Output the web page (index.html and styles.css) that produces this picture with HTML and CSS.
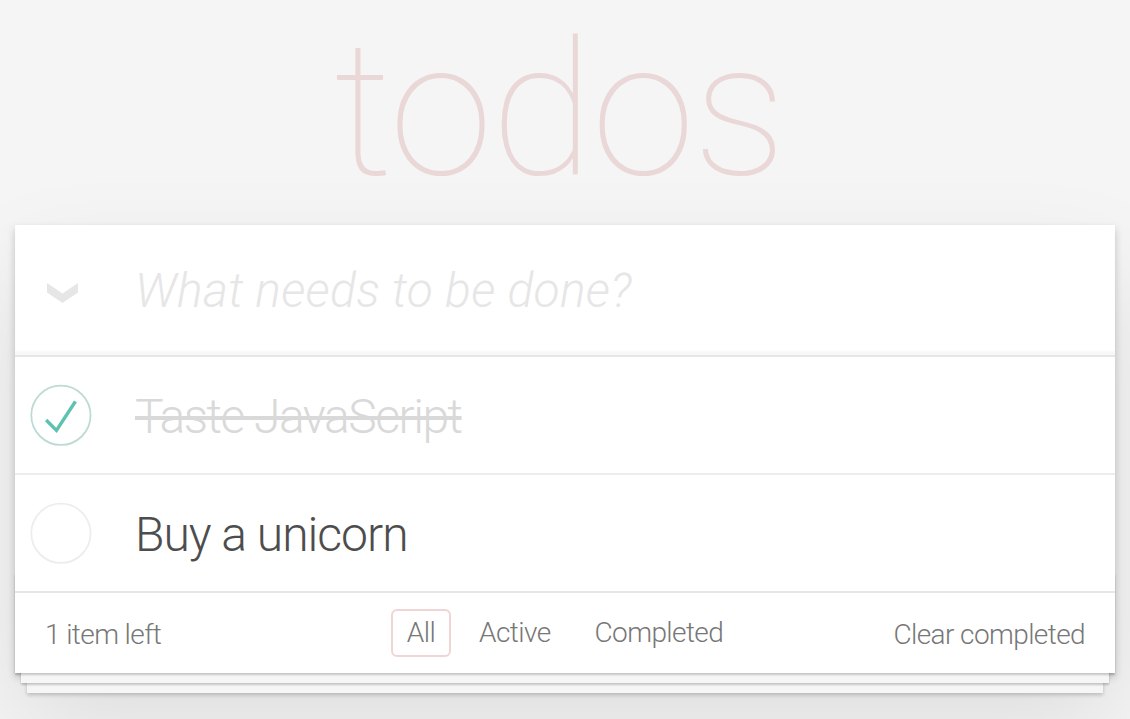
FILE: index.html
```html
<!DOCTYPE html>
<html lang="en">
<head>
<meta charset="utf-8">
<title>Todos</title>
<link rel="stylesheet" href="styles.css">
</head>
<body>
<div class="page">
  <h1 class="title">todos</h1>
  <section class="todoapp">
    <header class="new-row">
      <span class="toggle-all">
        <svg width="31" height="20" viewBox="0 0 31 20"><polygon points="0,0 15.5,10.5 31,0 31,9.5 15.5,20 0,9.5" fill="#e6e6e6"/></svg>
      </span>
      <input class="new-todo" type="text" placeholder="What needs to be done?">
    </header>
    <ul class="todo-list">
      <li class="todo completed">
        <svg class="toggle" width="80" height="80" viewBox="-10 -18 100 135"><circle cx="50" cy="50" r="50" fill="none" stroke="#bddad5" stroke-width="3"/><path fill="#5dc2af" d="M72 25L42 71 27 56l-4 4 20 20 34-52z"/></svg>
        <span class="label">Taste JavaScript</span>
      </li>
      <li class="todo">
        <svg class="toggle" width="80" height="80" viewBox="-10 -18 100 135"><circle cx="50" cy="50" r="50" fill="none" stroke="#ededed" stroke-width="3"/></svg>
        <span class="label">Buy a unicorn</span>
      </li>
    </ul>
    <footer class="footer">
      <span class="count">1 item left</span>
      <ul class="filters">
        <li><a class="selected">All</a></li>
        <li><a>Active</a></li>
        <li><a>Completed</a></li>
      </ul>
      <span class="clear">Clear completed</span>
    </footer>
  </section>
</div>
</body>
</html>
```
FILE: styles.css
```css
html, body {
  margin: 0;
  padding: 0;
}
body {
  background: #f5f5f5;
  color: #4d4d4d;
  font-family: "Helvetica Neue", Roboto, "Liberation Sans", sans-serif;
  font-weight: 300;
  min-height: 719px;
  -webkit-font-smoothing: antialiased;
}
.page {
  width: 1100px;
  margin: 0 auto;
  padding-bottom: 46px;
}
.title {
  margin: 0 0 5px;
  padding-right: 12px;
  height: 220px;
  line-height: 220px;
  font-size: 188px;
  font-weight: 100;
  letter-spacing: -2px;
  text-align: center;
  color: rgba(175, 47, 47, 0.15);
}
.todoapp {
  background: #fff;
  position: relative;
  box-shadow: 0 4px 8px 0 rgba(0, 0, 0, 0.2), 0 50px 100px 0 rgba(0, 0, 0, 0.1);
}
.new-row {
  display: flex;
  align-items: center;
  height: 130px;
  box-shadow: inset 0 -4px 2px rgba(0, 0, 0, 0.03);
  border-bottom: 2px solid #e6e6e6;
}
.toggle-all {
  width: 120px;
  padding-left: 32px;
  box-sizing: border-box;
  display: flex;
  margin-top: 6px;
}
.new-todo {
  flex: 1;
  border: none;
  outline: none;
  background: transparent;
  padding: 0;
  margin: 0;
  font-family: inherit;
  font-size: 48px;
  font-weight: 300;
  letter-spacing: 0.3px;
  color: #4d4d4d;
  line-height: 67px;
  height: 67px;
}
.new-todo::placeholder {
  font-style: italic;
  font-weight: 300;
  color: #e6e6e6;
}
.todo-list {
  list-style: none;
  margin: 0;
  padding: 0;
}
.todo {
  display: flex;
  align-items: center;
  height: 116px;
  border-bottom: 2px solid #ededed;
}
.todo:last-child {
  border-bottom: none;
}
.toggle {
  flex: none;
  display: block;
}
.label {
  padding: 4px 0 0 40px;
  font-size: 48px;
  line-height: 1.2;
  letter-spacing: -1px;
  color: #4d4d4d;
}
.completed .label {
  color: #d9d9d9;
  text-decoration: line-through;
  letter-spacing: -1.5px;
}
.footer {
  position: relative;
  display: flex;
  align-items: center;
  justify-content: space-between;
  box-sizing: border-box;
  height: 82px;
  padding: 4px 30px 0;
  border-top: 2px solid #e6e6e6;
  color: #777;
  font-size: 28px;
  letter-spacing: -0.6px;
}
.footer::before {
  content: "";
  position: absolute;
  left: 0;
  right: 0;
  bottom: 0;
  height: 100px;
  overflow: hidden;
  box-shadow: 0 2px 2px rgba(0, 0, 0, 0.2),
    0 16px 0 -6px #f6f6f6,
    0 18px 2px -6px rgba(0, 0, 0, 0.2),
    0 32px 0 -12px #f6f6f6,
    0 34px 4px -12px rgba(0, 0, 0, 0.2);
  pointer-events: none;
}
.count, .clear {
  position: relative;
  line-height: 40px;
}
.filters {
  position: absolute;
  left: 0;
  right: 0;
  top: 0;
  bottom: 0;
  margin: 0;
  padding: 0;
  list-style: none;
  display: flex;
  justify-content: center;
  align-items: center;
}
.filters a {
  display: block;
  margin: 0 6px;
  padding: 6px 14px;
  line-height: 32px;
  border: 2px solid transparent;
  border-radius: 6px;
  color: inherit;
}
.filters a.selected {
  border-color: rgba(175, 47, 47, 0.2);
}
.clear {
  margin-left: auto;
}
```
